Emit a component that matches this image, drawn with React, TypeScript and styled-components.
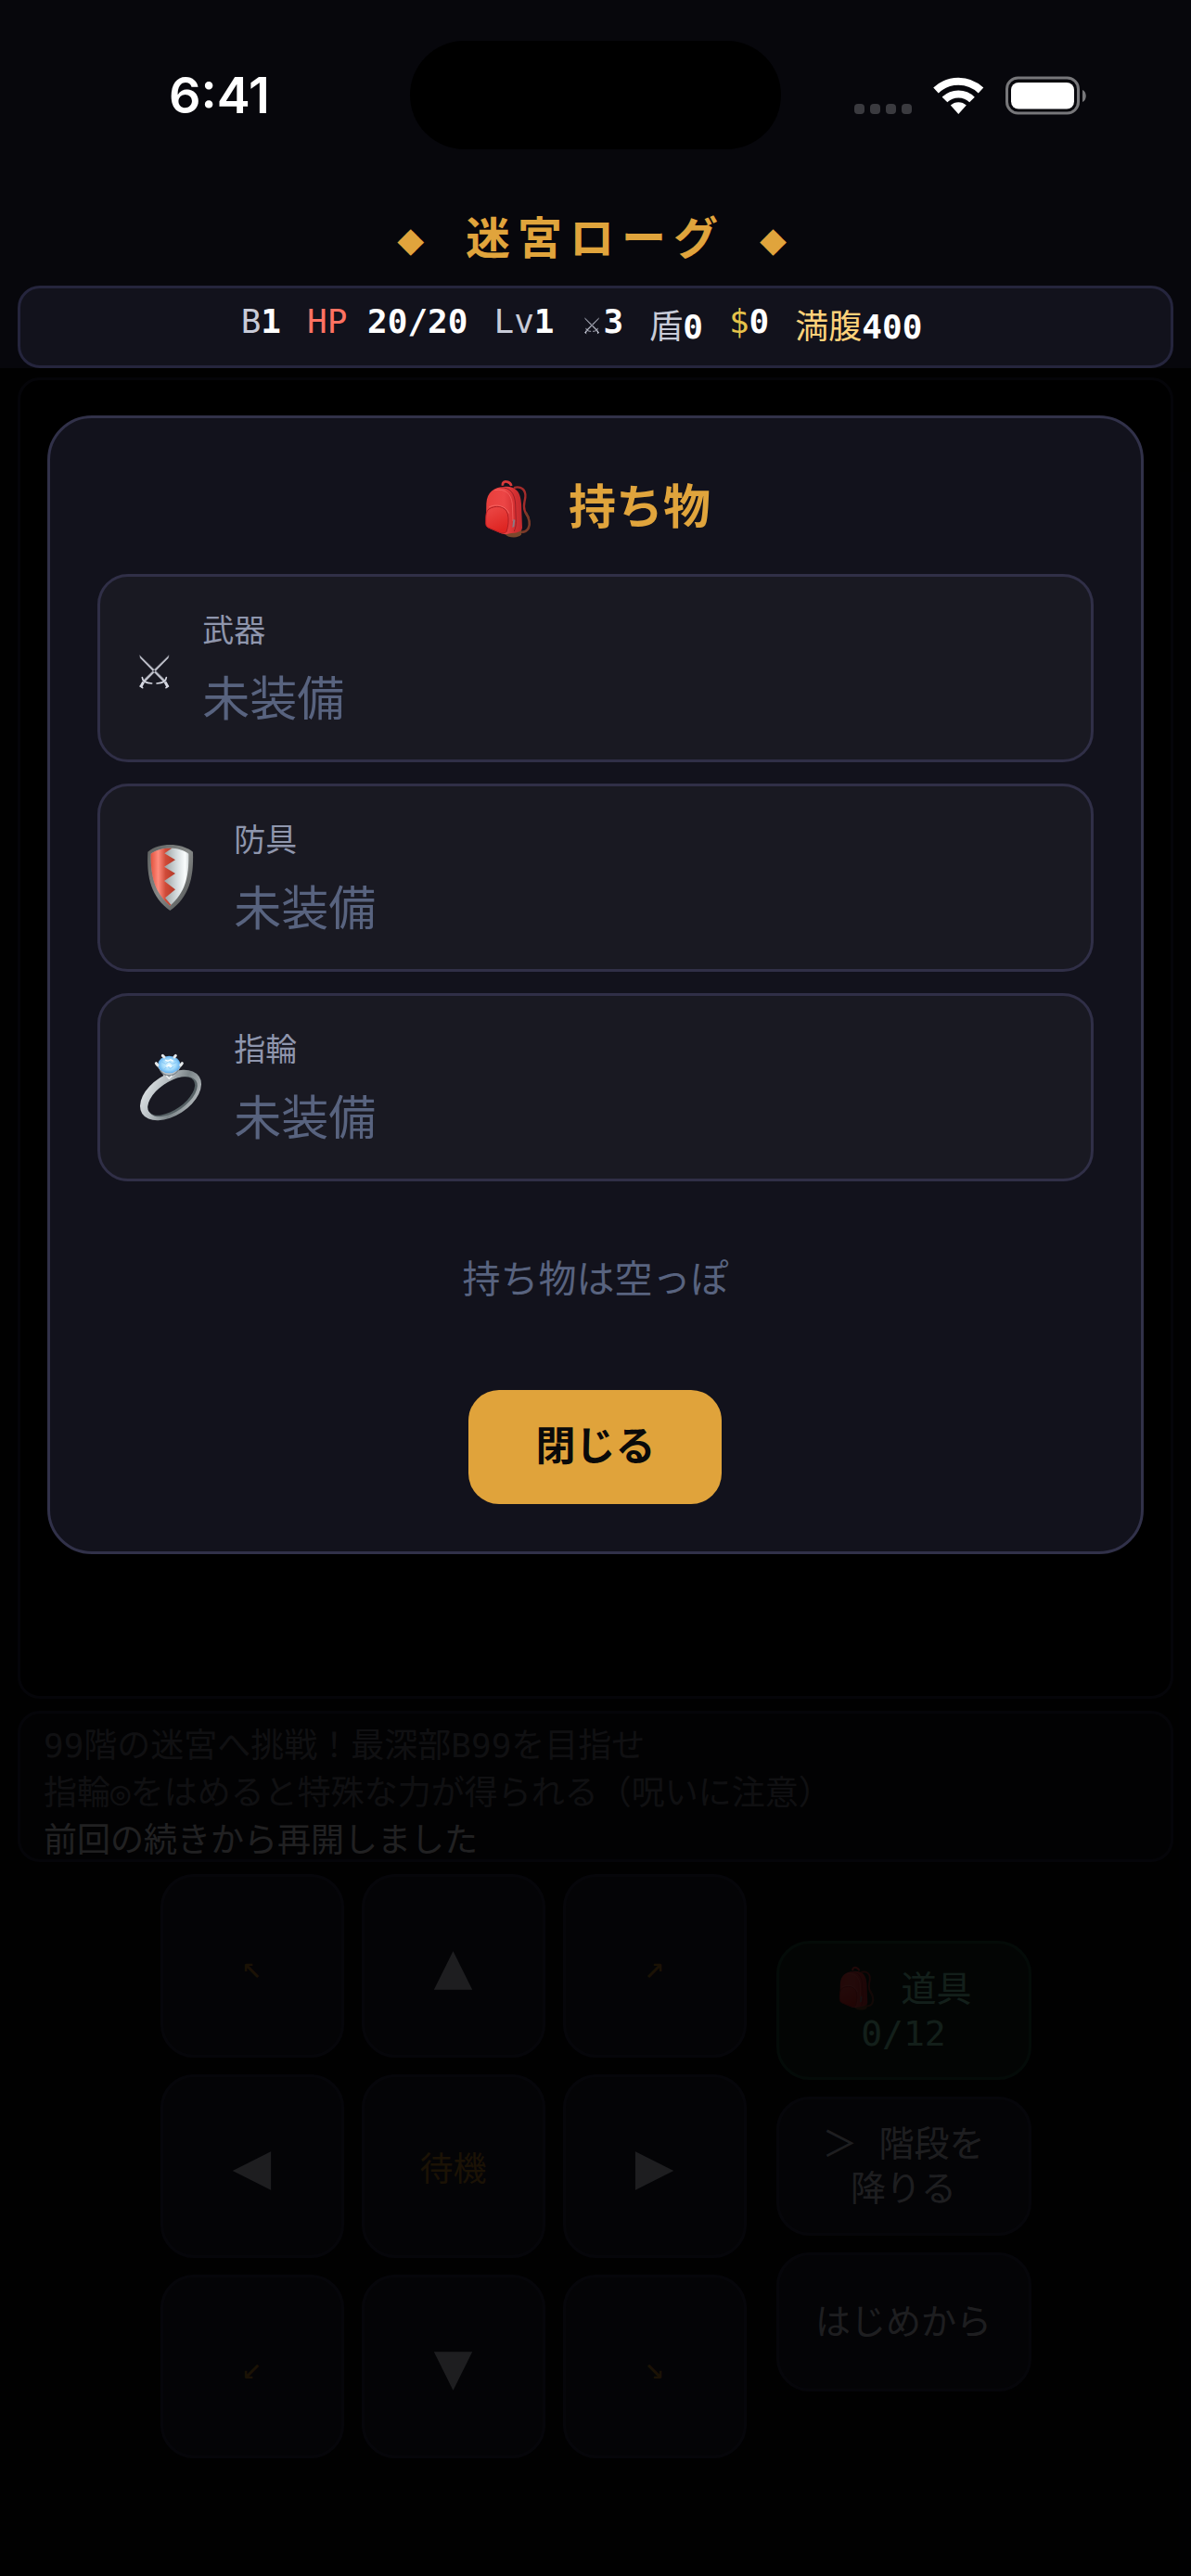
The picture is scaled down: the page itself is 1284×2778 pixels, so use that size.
import styled, { createGlobalStyle, css } from 'styled-components';

const GlobalStyle = createGlobalStyle`
  * {
    box-sizing: border-box;
  }

  body {
    margin: 0;
    background: #07070c;
    color: #c8cbd8;
    font-family: 'DejaVu Sans Mono', 'Noto Sans CJK JP', monospace;
  }

  button {
    font-family: inherit;
    cursor: pointer;
  }
`;

const Screen = styled.div`
  display: flex;
  flex-direction: column;
  min-height: 100vh;
`;

const PhoneBar = styled.div`
  display: grid;
  grid-template-columns: 1fr 400px 1fr;
  align-items: center;
  padding-top: 44px;
`;

const Clock = styled.time`
  padding-left: 182px;
  color: #fff;
  font-family: Inter, sans-serif;
  font-size: 54px;
  font-weight: 600;
  line-height: 60px;
`;

const Island = styled.div`
  height: 117px;
  border-radius: 59px;
  background: #000;
`;

const PhoneIcons = styled.svg`
  justify-self: end;
  width: 250px;
  height: 42px;
  margin-right: 113px;
`;

const Title = styled.h1`
  margin: 60px 0 15px;
  color: #e0a43c;
  font-size: 48px;
  font-weight: 700;
  line-height: 72px;
  letter-spacing: 8px;
  text-align: center;
`;

const Stats = styled.div`
  display: flex;
  justify-content: center;
  align-items: flex-start;
  gap: 28px;
  margin: 0 19px;
  padding: 15px 48px 14px 18px;
  border: 3px solid #25253d;
  border-radius: 24px;
  background: #12121c;
  font-size: 36px;
`;

const Stat = styled.span<{ $color?: string; $kanji?: boolean }>`
  color: ${({ $color }) => $color || '#c8cbd8'};
  line-height: ${({ $kanji }) => ($kanji ? 54 : 42)}px;
  white-space: nowrap;

  b {
    color: #fff;
  }
`;

const Body = styled.main`
  position: relative;
  flex: 1;
  display: flex;
  flex-direction: column;
  gap: 13px;
  padding: 10px 19px 127px;
`;

const panel = css`
  border: 3px solid #25253d;
  border-radius: 24px;
`;

const Dungeon = styled.div`
  ${panel}
  flex: 1;
  background: #000;
`;

const Log = styled.ul`
  ${panel}
  height: 163px;
  margin: 0;
  padding: 9px 25px;
  overflow: hidden;
  background: #0f0f17;
  list-style: none;
  font-size: 36px;
  line-height: 51px;
`;

const LogLine = styled.li<{ $latest?: boolean }>`
  color: ${({ $latest }) => ($latest ? '#dcdce2' : '#6b6b78')};
`;

const Controls = styled.div`
  display: flex;
  justify-content: center;
  align-items: center;
  gap: 32px;
`;

const Pad = styled.div`
  display: grid;
  grid-template-columns: repeat(3, 198px);
  grid-auto-rows: 198px;
  gap: 18px 19px;
`;

const controlButton = css`
  padding: 0;
  border: 3px solid #2c2c46;
  border-radius: 36px;
  background: #1b1b2b;
`;

const PadKey = styled.button<{ $kind: 'move' | 'diagonal' | 'wait' }>`
  ${controlButton}
  color: ${({ $kind }) => ($kind === 'move' ? '#c8cbd8' : '#b27a24')};
  font-size: ${({ $kind }) => ($kind === 'move' ? 54 : 36)}px;
  ${({ $kind }) => $kind === 'move' && "font-family: 'DejaVu Sans', sans-serif;"}
`;

const Actions = styled.div`
  display: flex;
  flex-direction: column;
  gap: 18px;
`;

const ActionButton = styled.button<{ $bag?: boolean }>`
  ${controlButton}
  width: 275px;
  height: 150px;
  color: #c8cbd8;
  font-size: 38px;
  line-height: 48px;
  ${({ $bag }) =>
    $bag &&
    css`
      border-color: #1f4a38;
      background: #16261f;
      color: #7fd0ae;
    `}
`;

const Overlay = styled.div`
  position: absolute;
  inset: 0;
  padding-top: 51px;
  background: rgba(0, 0, 0, 0.85);
`;

const Modal = styled.section`
  width: 92%;
  margin: 0 auto;
  padding: 51px;
  border: 3px solid #313149;
  border-radius: 48px;
  background: #12121c;
  text-align: center;
`;

const ModalTitle = styled.h2`
  display: flex;
  justify-content: center;
  align-items: center;
  gap: 32px;
  margin: 0 0 25px;
  color: #e0a43c;
  font-size: 51px;
  font-weight: 700;
  line-height: 92px;
`;

const SlotList = styled.ul`
  display: flex;
  flex-direction: column;
  gap: 23px;
  margin: 0;
  padding: 0;
  list-style: none;
`;

const Slot = styled.li`
  display: flex;
  align-items: center;
  gap: 33px;
  padding: 24px 36px;
  border: 3px solid #302f47;
  border-radius: 33px;
  background: #191922;
  text-align: left;
`;

const SlotLabel = styled.div`
  color: #8f96ad;
  font-size: 34px;
  line-height: 68px;
`;

const SlotItem = styled.div`
  color: #58637f;
  font-size: 51px;
  line-height: 81px;
`;

const EmptyText = styled.p`
  margin: 0;
  padding: 76px 0 89px;
  color: #58637f;
  font-size: 41px;
  line-height: 60px;
`;

const CloseButton = styled.button`
  display: block;
  margin: 0 auto;
  padding: 30px 72px;
  border: 0;
  border-radius: 33px;
  background: #e0a33b;
  color: #0a0a0a;
  font-size: 43px;
  font-weight: 700;
  line-height: 63px;
`;

const Icon = styled.svg<{ $size: number }>`
  flex: none;
  width: ${({ $size }) => $size}px;
  height: ${({ $size }) => $size}px;
`;

const InlineIcon = styled(Icon)`
  vertical-align: -10px;
`;

const StatIcon = styled(Icon)`
  vertical-align: -3px;
`;

const BackpackShape = ({ id }: { id: string }) => (
  <>
    <defs>
      <linearGradient id={`${id}-body`} x1="0" x2="1" y1="0" y2="0">
        <stop offset="0" stopColor="#e83f3c" />
        <stop offset="0.5" stopColor="#ec4646" />
        <stop offset="0.8" stopColor="#d52f31" />
        <stop offset="1" stopColor="#bf2a2f" />
      </linearGradient>
      <linearGradient id={`${id}-pocket`} x1="0" x2="0.4" y1="0" y2="1">
        <stop offset="0" stopColor="#ec4a48" />
        <stop offset="1" stopColor="#de2522" />
      </linearGradient>
    </defs>
    <path d="M162 107c24-7 39 7 37 30-2 18-8 28-2 44 4 12 9 17 13 24" fill="none" stroke="#a52c2b" strokeWidth="7" />
    <path d="M200 186c12 20 16 38 9 52-5 10-14 13-24 13" fill="none" stroke="#7a3a28" strokeWidth="8" />
    <path d="M126 100c-2-11 7-15 15-12 8 2 11 6 13 13" fill="none" stroke="#d93a3a" strokeWidth="8" />
    <path d="M133 256c10 15 46 15 53 2l1-16-45 4z" fill="#7a482c" />
    <path d="M73 158c2-37 24-54 62-55 38 0 49 22 51 56l3 76c0 12-12 17-34 19-13 2-22 6-34 1l-39-17c-7-4-10-9-10-18z" fill={`url(#${id}-body)`} />
    <path d="M118 106c34 0 46 20 49 52l2 58c0 14-2 22-6 32" fill="none" stroke="#9c2027" strokeWidth="3" />
    <path d="M100 115c34-6 53 10 57 44l2 56" fill="none" stroke="#fb6c69" strokeWidth="2" />
    <path d="M81 176c20-13 54-12 61 16 4 16 3 38-4 57-5 7-15 5-23 2l-36-15c-6-3-8-8-8-15 0-18-1-36 10-45z" fill={`url(#${id}-pocket)`} stroke="#b01d22" strokeWidth="3" />
    <path d="M81 170c24-13 56-4 65 20" fill="none" stroke="#fb7470" strokeWidth="2" />
    <path d="M160 209l6 2-3 22-6 3z" fill="#8b7b84" />
  </>
);

const SwordsShape = () => (
  <g fill="none" stroke="currentColor" strokeLinecap="round">
    <path d="M94 321l2 8 76 78 5-5zM188 321l-2 8-76 78-5-5z" fill="currentColor" stroke="currentColor" strokeWidth="1" opacity="0.9" />
    <path d="M106 406l-9 17M176 406l9 17" strokeWidth="9" strokeLinecap="butt" />
    <path d="M102 392c1 14 14 18 31 19M180 392c-1 14-14 18-31 19" strokeWidth="5" />
    <path d="M96 420l7 5M186 420l-7 5" strokeWidth="5" />
  </g>
);

const ShieldIcon = () => (
  <Icon $size={75} viewBox="74 174 225 225" aria-hidden="true">
    <defs>
      <linearGradient id="shield-rim" x1="0" x2="1" y1="0" y2="1">
        <stop offset="0" stopColor="#5d605f" />
        <stop offset="0.5" stopColor="#858887" />
        <stop offset="1" stopColor="#4c4f4f" />
      </linearGradient>
      <linearGradient id="shield-red" x1="130" x2="210" y1="0" y2="0" gradientUnits="userSpaceOnUse">
        <stop offset="0" stopColor="#e2533f" />
        <stop offset="0.3" stopColor="#ff8b7c" />
        <stop offset="0.6" stopColor="#cf4a38" />
        <stop offset="1" stopColor="#b23a28" />
      </linearGradient>
      <linearGradient id="shield-white" x1="175" x2="253" y1="0" y2="0" gradientUnits="userSpaceOnUse">
        <stop offset="0" stopColor="#9da4a5" />
        <stop offset="0.5" stopColor="#d5dcde" />
        <stop offset="0.85" stopColor="#fafdfd" />
        <stop offset="1" stopColor="#cfd5d6" />
      </linearGradient>
    </defs>
    <path d="M120 203c20-17 45-23 72-23s53 7 74 23c3 86-13 145-74 190-61-45-76-104-72-190z" fill="url(#shield-rim)" />
    <path d="M130 209c18-13 39-18 62-18s43 5 60 18c2 74-12 126-60 168-49-42-63-94-62-168z" fill="url(#shield-white)" />
    <path d="M198 191l-24 17 35 21-36 22 36 22-36 24 36 28-33 27 19 22-3 3c-49-42-63-94-62-168 20-14 42-19 68-18z" fill="url(#shield-red)" />
  </Icon>
);

const RingIcon = () => (
  <Icon $size={75} viewBox="74 851 225 225" aria-hidden="true">
    <defs>
      <linearGradient id="ring-band" x1="0" x2="1" y1="0" y2="1">
        <stop offset="0" stopColor="#eef1f3" />
        <stop offset="0.35" stopColor="#b9c0c4" />
        <stop offset="0.6" stopColor="#7b8488" />
        <stop offset="1" stopColor="#c9cdd0" />
      </linearGradient>
      <radialGradient id="ring-gem">
        <stop offset="0" stopColor="#e4f9ff" />
        <stop offset="0.6" stopColor="#a4dcfc" />
        <stop offset="1" stopColor="#63b0ee" />
      </radialGradient>
    </defs>
    <ellipse cx="194" cy="989" rx="110" ry="66" transform="rotate(-33 194 989)" fill="url(#ring-band)" />
    <ellipse cx="201" cy="994" rx="91" ry="47" transform="rotate(-35 201 994)" fill="#566165" />
    <ellipse cx="196" cy="992" rx="88" ry="44" transform="rotate(-35 196 992)" fill="#191922" />
    <path d="M146 890l22 30q8 20 21 18t22-18l22-30-8 4h-70z" fill="#bcc2c6" />
    <path d="M160 908q8 16 29 18 20-2 30-18" fill="none" stroke="#7c8489" strokeWidth="4" />
    <path d="M180 926l9 10 9-10" fill="none" stroke="#eef1f3" strokeWidth="4" />
    <ellipse cx="189" cy="890" rx="36" ry="28" fill="url(#ring-gem)" />
    <path d="M166 882l12 6 10-8 12 8 12-5M174 904l10-8 8 8 10-7" fill="none" stroke="#74b9f3" strokeWidth="2" />
    <path d="M176 875l9 4 9-5 8 5M180 897l9-5 8 5" fill="none" stroke="#fff" strokeWidth="4" />
    <path d="M168 861l5 5M210 861l-4 5M147 886l5 6M231 886l-5 6" stroke="#e4e7e9" strokeWidth="9" strokeLinecap="round" />
  </Icon>
);

interface EquipSlot {
  id: string;
  label: string;
  item: string | null;
  icon: React.ReactNode;
}

const slots: EquipSlot[] = [
  {
    id: 'weapon',
    label: '武器',
    item: null,
    icon: (
      <Icon $size={41} viewBox="74 300 123 123" overflow="visible" color="#d6d8e2" aria-hidden="true">
        <SwordsShape />
      </Icon>
    ),
  },
  { id: 'armor', label: '防具', item: null, icon: <ShieldIcon /> },
  { id: 'ring', label: '指輪', item: null, icon: <RingIcon /> },
];

const logs = [
  '99階の迷宮へ挑戦！最深部B99を目指せ',
  '指輪◎をはめると特殊な力が得られる（呪いに注意）',
  '前回の続きから再開しました',
];

const padKeys = ['↖', '▲', '↗', '◀', '待機', '▶', '↙', '▼', '↘'];

const keyKind = (key: string) => {
  if (key === '待機') return 'wait';
  return '▲◀▶▼'.includes(key) ? 'move' : 'diagonal';
};

const App = () => {
  return (
    <>
      <GlobalStyle />
      <Screen>
        <PhoneBar>
          <Clock>6:41</Clock>
          <Island />
          <PhoneIcons viewBox="0 0 250 42" aria-hidden="true">
            <g fill="#3a3a3f">
              {[0, 17, 34, 51].map((x) => (
                <rect key={x} x={x} y="30" width="11" height="11" rx="4" />
              ))}
            </g>
            <g fill="none" stroke="#fff" strokeWidth="8">
              <path d="M88 15.500a35 35 0 0 1 48.500 0" />
              <path d="M97.500 25.500a21 21 0 0 1 29.500 0" />
            </g>
            <path d="M112.300 41l-8.500-9.500a12.500 12.500 0 0 1 17 0z" fill="#fff" />
            <rect x="164.500" y="2" width="77" height="38" rx="12" fill="none" stroke="#77777a" strokeWidth="3" />
            <rect x="169" y="7" width="68" height="28.500" rx="8" fill="#fff" />
            <path d="M246 15c5 2 5 11 0 13z" fill="#77777a" />
          </PhoneIcons>
        </PhoneBar>

        <Title>◆ 迷宮ローグ ◆</Title>

        <Stats>
          <Stat>B<b>1</b></Stat>
          <Stat $color="#ff7262">HP <b>20/20</b></Stat>
          <Stat>Lv<b>1</b></Stat>
          <Stat>
            <StatIcon $size={25} viewBox="66 285 155 155" aria-hidden="true">
              <SwordsShape />
            </StatIcon>
            <b>3</b>
          </Stat>
          <Stat $kanji>盾<b>0</b></Stat>
          <Stat $color="#e6c34a">$<b>0</b></Stat>
          <Stat $color="#ffd27a" $kanji>満腹<b>400</b></Stat>
        </Stats>

        <Body>
          <Dungeon />
          <Log>
            {logs.map((line, i) => (
              <LogLine key={line} $latest={i === logs.length - 1}>{line}</LogLine>
            ))}
          </Log>
          <Controls>
            <Pad>
              {padKeys.map((key) => (
                <PadKey key={key} type="button" $kind={keyKind(key)}>{key}</PadKey>
              ))}
            </Pad>
            <Actions>
              <ActionButton type="button" $bag>
                <InlineIcon $size={48} viewBox="54 80 189 189" aria-hidden="true">
                  <BackpackShape id="bag-small" />
                </InlineIcon>{' '}
                道具
                <br />
                0/12
              </ActionButton>
              <ActionButton type="button">
                ＞ 階段を
                <br />
                降りる
              </ActionButton>
              <ActionButton type="button">はじめから</ActionButton>
            </Actions>
          </Controls>

          <Overlay>
            <Modal role="dialog" aria-labelledby="bag-title">
              <ModalTitle id="bag-title">
                <Icon $size={63} viewBox="54 80 189 189" aria-hidden="true">
                  <BackpackShape id="bag-title-icon" />
                </Icon>
                持ち物
              </ModalTitle>
              <SlotList>
                {slots.map((slot) => (
                  <Slot key={slot.id}>
                    {slot.icon}
                    <div>
                      <SlotLabel>{slot.label}</SlotLabel>
                      <SlotItem>{slot.item ?? '未装備'}</SlotItem>
                    </div>
                  </Slot>
                ))}
              </SlotList>
              <EmptyText>持ち物は空っぽ</EmptyText>
              <CloseButton type="button">閉じる</CloseButton>
            </Modal>
          </Overlay>
        </Body>
      </Screen>
    </>
  );
};

export default App;
